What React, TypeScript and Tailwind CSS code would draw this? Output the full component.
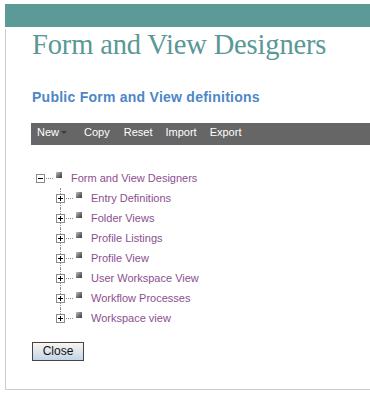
import React from "react"

const children = [
  "Entry Definitions",
  "Folder Views",
  "Profile Listings",
  "Profile View",
  "User Workspace View",
  "Workflow Processes",
  "Workspace view",
]

function ToggleBox({ open }: { open: boolean }) {
  return (
    <svg width="9" height="9" viewBox="0 0 9 9" shapeRendering="crispEdges" className="block shrink-0">
      <rect x="0.5" y="0.5" width="8" height="8" fill="#fff" stroke="#8a8a8a" />
      <rect x="2" y="4" width="5" height="1" fill="#000" />
      {!open && <rect x="4" y="2" width="1" height="5" fill="#000" />}
    </svg>
  )
}

function NodeIcon() {
  return <span className="block h-[6px] w-[6px] shrink-0 -mt-[6px] bg-linear-to-br from-[#c8c8c8] via-[#777] to-[#3a3a3a]" />
}

function TreeRow({ label, open }: { label: string; open: boolean }) {
  return (
    <div className="flex h-[20px] items-center">
      <ToggleBox open={open} />
      <span className="ml-[1px] w-[7px] border-t border-dotted border-[#8a8a8a]" />
      <span className="ml-[3px]"><NodeIcon /></span>
      <span className="ml-[9px] text-[11px] leading-[20px] text-[#8b4f8f] whitespace-nowrap">{label}</span>
    </div>
  )
}

export default function App() {
  return (
    <div className="min-h-[395px] bg-white pt-[4px] pl-[5px] overflow-hidden" style={{ fontFamily: '"Liberation Sans", Arial, sans-serif' }}>
      <div className="h-[23px] bg-[#5c9a98]" />
      <div className="border-l border-b border-[#cccccc] pl-[25px] pb-[25px] h-[361px]">
        <h1
          className="ml-[1px] mt-[2px] text-[28.5px] leading-[32px] tracking-[-0.15px] text-[#5a9896] whitespace-nowrap"
          style={{ fontFamily: '"Liberation Serif", "Times New Roman", serif' }}
        >
          Form and View Designers
        </h1>
        <h2 className="ml-[1px] mt-[28px] text-[14px] leading-[17px] font-bold tracking-[0.25px] text-[#4d87c7] whitespace-nowrap">
          Public Form and View definitions
        </h2>
        <div className="mt-[17px] flex h-[22px] bg-[#666666] pt-[2px] pl-[6px] text-[11px] leading-[14px] text-white">
          <span>
            New
            <svg width="6" height="3" viewBox="0 0 6 3" className="ml-[2px] mb-[2px] inline-block">
              <path d="M0 0h6L3 3z" fill="#3c3c3c" />
            </svg>
          </span>
          <span className="ml-[17px]">Copy</span>
          <span className="ml-[14px]">Reset</span>
          <span className="ml-[13px]">Import</span>
          <span className="ml-[13px]">Export</span>
        </div>

        <div className="mt-[23px] ml-[5px]">
          <TreeRow label="Form and View Designers" open />
          <div className="ml-[20px]">
            {children.map((c, i) => (
              <div key={c} className="relative">
                <span
                  className={`absolute left-[4px] top-0 border-l border-dotted border-[#8a8a8a] ${
                    i === children.length - 1 ? "h-[6px]" : "h-[20px]"
                  }`}
                />
                <div className="relative">
                  <TreeRow label={c} open={false} />
                </div>
              </div>
            ))}
          </div>
        </div>

        <button className="mt-[14px] ml-[1px] block h-[19px] w-[52px] border border-[#444] bg-linear-to-b from-[#f8f6ee] to-[#c4d4e8] text-[12px] leading-[17px] text-[#111]">
          Close
        </button>
      </div>
    </div>
  )
}
